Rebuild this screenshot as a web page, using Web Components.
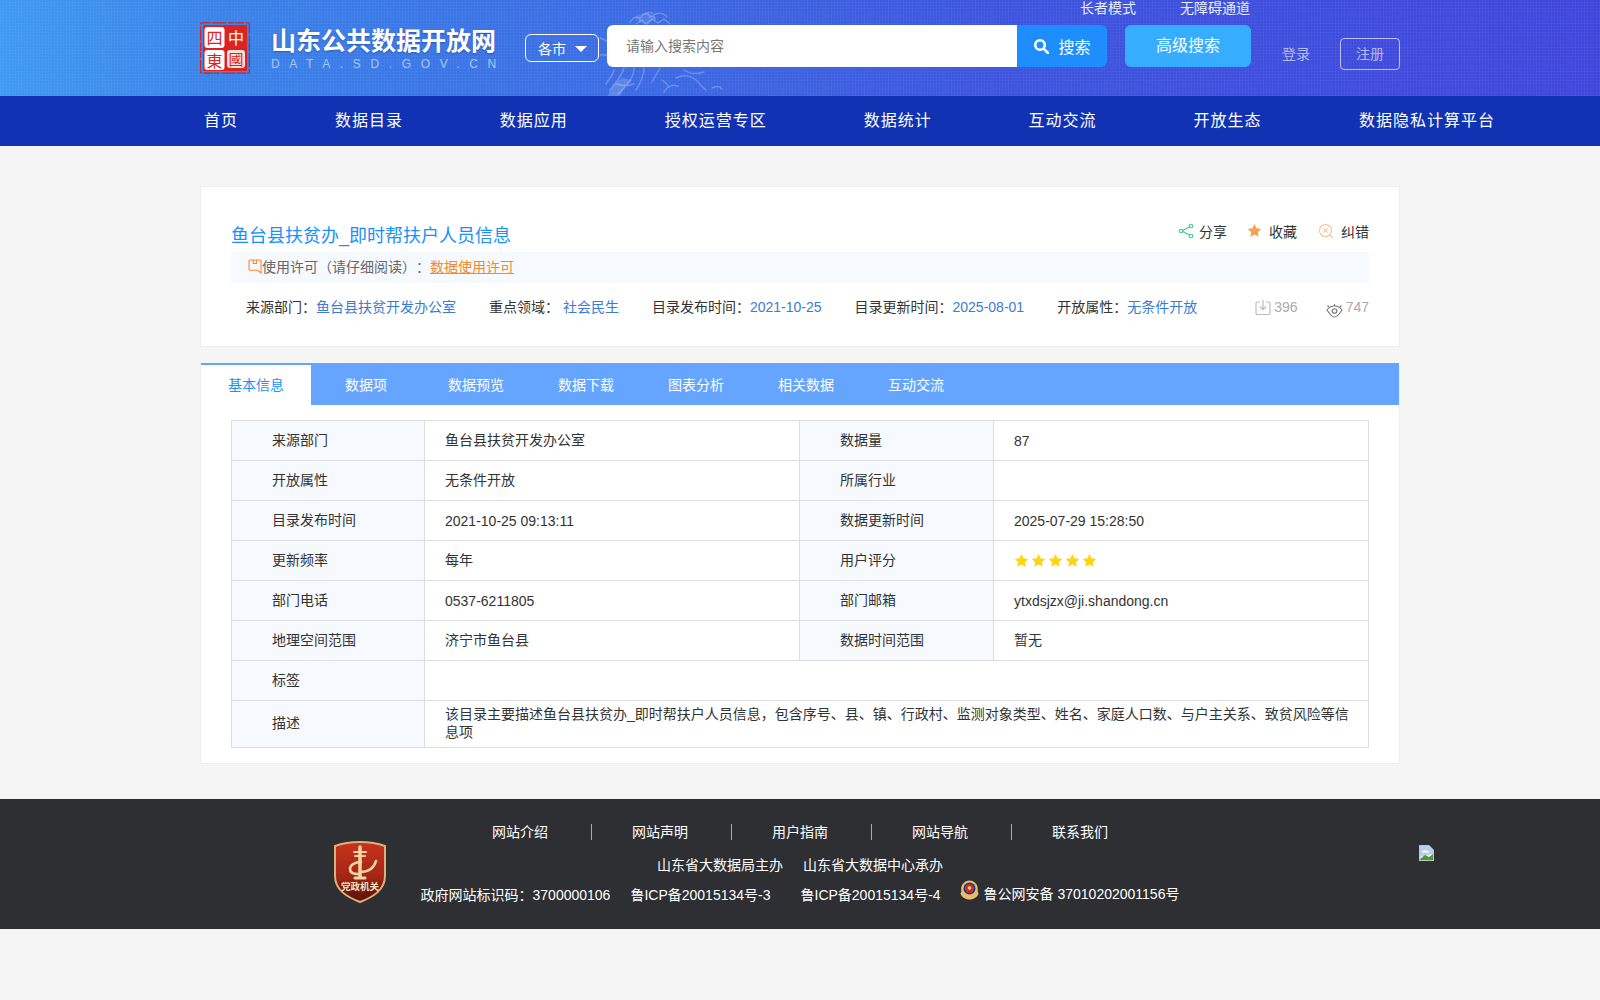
<!DOCTYPE html>
<html lang="zh-CN"><head><meta charset="utf-8"><title>山东公共数据开放网</title>
<style>
html,body{margin:0;padding:0;background:#f5f5f5;font:14px "Liberation Sans","Noto Sans CJK SC",sans-serif;color:#333;text-spacing-trim:space-all}
sd-main{display:block;width:1200px;margin:40px auto 35px}
</style></head><body>
<sd-header></sd-header>
<sd-nav></sd-nav>
<sd-main>
  <sd-summary></sd-summary>
  <sd-detail></sd-detail>
</sd-main>
<sd-footer></sd-footer>
<script>
const star=(c,s)=>`<svg width="${s}" height="${s}" viewBox="0 0 24 24"><path fill="${c}" d="M12 1.5l3.3 6.9 7.5 1-5.5 5.2 1.4 7.5L12 18.4l-6.7 3.7 1.4-7.5L1.2 9.4l7.5-1z"/></svg>`;
const col=`<span style='font-family:"Noto Sans CJK TC",sans-serif;line-height:0'>：</span>`;
function def(name,css,html){
  customElements.define(name,class extends HTMLElement{
    constructor(){super();const r=this.attachShadow({mode:'open'});r.innerHTML=`<style>${css}</style>${html}`;}
  });
}
def('sd-header',`
:host{display:block;height:96px;position:relative;overflow:hidden;color:#fff;
 background:repeating-linear-gradient(0deg,rgba(255,255,255,.03) 0 1px,transparent 1px 3px),repeating-linear-gradient(90deg,rgba(255,255,255,.03) 0 1px,transparent 1px 3px),linear-gradient(90deg,#3f9af1 0,#3a84ea 200px,#3d55de 1000px,#4046dc 1600px)}
.globe{position:absolute;left:600px;top:0}
.in{position:relative;width:1200px;margin:0 auto;display:flex;align-items:flex-start}
.logo{display:flex;margin-top:22px;width:325px;flex:none}
.seal{display:block;flex:none}
.names{margin-left:21px;margin-top:5px}
.t{font-size:25px;line-height:29px;font-weight:bold;white-space:nowrap;text-shadow:0 1px 2px rgba(0,0,60,.3)}
.s{font-size:12px;line-height:14px;margin-top:1px;letter-spacing:9.65px;color:#a6c8f4;white-space:nowrap}
.city{box-sizing:border-box;margin-top:34px;width:74px;height:28px;border:1px solid #fff;border-radius:6px;display:flex;align-items:center;padding-left:12px;font-size:14px;flex:none}
.city i{margin-left:9px;margin-top:2px;border:6px solid transparent;border-top:6px solid #fff;border-bottom:0}
.right{margin-left:8px;flex:1;min-width:0}
.top{display:flex;height:17px;line-height:17px;font-size:14px;padding-left:473px;gap:44px;color:#e8ecfb}
.row{display:flex;margin-top:8px;align-items:flex-start}
.input{box-sizing:border-box;width:410px;height:42px;background:#fff;border-radius:6px 0 0 6px;color:#777;font-size:14px;line-height:42px;padding-left:19px}
.btn{width:90px;height:42px;background:#1e8eff;border-radius:0 6px 6px 0;display:flex;align-items:center;justify-content:center;gap:9px;font-size:16px}
.adv{margin-left:18px;width:126px;height:42px;line-height:42px;text-align:center;background:#36adff;border-radius:6px;font-size:16px}
.login{margin-left:31px;margin-top:20px;line-height:18px;width:28px;color:rgba(255,255,255,.62);white-space:nowrap}
.reg{box-sizing:border-box;margin-left:30px;margin-top:13px;width:60px;height:32px;line-height:30px;text-align:center;border:1px solid rgba(255,255,255,.65);border-radius:4px;color:rgba(255,255,255,.62)}
`,`
<svg class="globe" width="190" height="96" viewBox="0 0 190 96" fill="none" stroke="#dfeaff" stroke-linecap="round">
 <g opacity=".28" stroke-width="1.500">
  <path d="M30 22c4-6 8-6 10-3 3-6 8-7 10-2 3-2 5 0 5 3M44 14c5-2 9-2 10 1 4-3 10-2 13 2M36 24l6-4 4 4 6-5 6 4 6-4 6 5"/>
  <path d="M0 38c4 1 7 3 10 6M0 55c5-1 8 0 12 3"/>
  <path d="M14 70c-1 5-5 9-8 14M24 68c-2 8-8 14-14 22M34 68c0 9-7 18-16 26M44 68c0 8-3 14-8 22M60 68l-8 14M16 84c6 2 12 2 18 0"/>
  <path d="M76 78c8-4 14-3 20 2 4 3 6 8 10 10M84 70c6 4 14 4 20 2M64 92c4-6 8-8 14-6M112 88c4-2 8-2 10 1M62 80c3 2 5 3 7 7"/>
 </g>
 <path d="M8 96c2-8 8-14 14-18l10 2-8 8-4 8z" fill="#dfeaff" stroke="none" opacity=".2"/>
 <path d="M34 18c6-6 14-6 22-1l-8 8-8-2z" fill="#dfeaff" stroke="none" opacity=".13"/>
</svg>
<div class="in">
 <div class="logo">
  <svg class="seal" width="50" height="52" viewBox="0 0 50 52">
   <rect x=".6" y=".8" width="48.800" height="50.400" rx="1" fill="none" stroke="#d9201f" stroke-width="1.200" stroke-dasharray="9 1.500 14 2 6 1"/>
   <rect x="3" y="3" width="44" height="46" fill="#dc2320"/>
   <rect x="4.500" y="5" width="20" height="21" rx="3" fill="#fff"/>
   <rect x="4.500" y="28" width="20" height="20" rx="3" fill="#fff"/>
   <text x="14.500" y="22" text-anchor="middle" font-size="16" fill="#dc2320" font-family="Noto Sans CJK SC">四</text>
   <text x="14.500" y="44.500" text-anchor="middle" font-size="16" fill="#dc2320" font-family="Noto Sans CJK SC">東</text>
   <rect x="27" y="28" width="18" height="18" rx="3" fill="#f9e2dc"/>
   <text x="36" y="22" text-anchor="middle" font-size="16" fill="#fff" font-family="Noto Sans CJK SC">中</text>
   <text x="36" y="43" text-anchor="middle" font-size="15" fill="#dc2320" font-family="Noto Sans CJK SC">國</text>
  </svg>
  <div class="names"><div class="t">山东公共数据开放网</div><div class="s">DATA.SD.GOV.CN</div></div>
 </div>
 <div class="city">各市<i></i></div>
 <div class="right">
  <div class="top"><span>长者模式</span><span>无障碍通道</span></div>
  <div class="row">
   <div class="input">请输入搜索内容</div>
   <div class="btn"><svg width="16" height="16" viewBox="0 0 16 16" fill="none" stroke="#fff" stroke-width="2.600"><circle cx="7" cy="7" r="4.800"/><path d="M10.600 10.600L15 15" stroke-linecap="round"/></svg>搜索</div>
   <div class="adv">高级搜索</div>
   <div class="login">登录</div>
   <div class="reg">注册</div>
  </div>
 </div>
</div>`);
def('sd-nav',`
:host{display:block;height:50px;background:#1133b3;color:#fff}
.in{width:1200px;margin:0 auto;display:flex;gap:96.900px;padding-left:4px;box-sizing:border-box;font-size:16px;letter-spacing:1px;line-height:50px;white-space:nowrap}
.in span:last-child{margin-left:.7px}
`,`<div class="in"><span>首页</span><span>数据目录</span><span>数据应用</span><span>授权运营专区</span><span>数据统计</span><span>互动交流</span><span>开放生态</span><span>数据隐私计算平台</span></div>`);
def('sd-summary',`
:host{display:block;box-sizing:border-box;height:161px;background:#fff;border:1px solid #eee;padding:30px 30px 0}
.head{display:flex;justify-content:space-between;align-items:center;height:35px}
h1{margin:0;padding-top:4px;font-size:18px;font-weight:normal;color:#1890ff;line-height:35px}
.acts{display:flex;align-items:center;color:#333;font-size:14px;margin-top:-8px}
.acts span{display:flex;align-items:center}
.acts svg{display:block}
.lic{height:31px;background:#f6f9fe;display:flex;align-items:center;padding-left:17px;color:#666;line-height:31px}
.lic svg{margin-top:-3px;flex:none}
.lic a{color:#f7882f;text-decoration:underline}
.meta{display:flex;align-items:center;margin-top:9px;padding-left:15px;line-height:30px;white-space:nowrap}
.meta b{font-weight:normal;color:#3a7bd5}
.meta>span{margin-right:33px}
.stats{margin-left:auto;display:flex;align-items:center;color:#aaa}
.stats svg{display:block}
`,`
<div class="head"><h1>鱼台县扶贫办_即时帮扶户人员信息</h1>
 <div class="acts">
  <span><svg width="16" height="16" viewBox="0 0 16 16" fill="none" stroke="#3ecb8b" stroke-width="1.100"><path d="M12.500 3.400L3.600 8l8.900 4.600"/><circle cx="13" cy="3" r="1.800" fill="#fff"/><circle cx="3" cy="8" r="1.800" fill="#fff"/><circle cx="13" cy="13" r="1.800" fill="#fff"/></svg><span style="margin-left:5px">分享</span></span>
  <span style="margin-left:20px">${star('#f9a050',15)}<span style="margin-left:7px">收藏</span></span>
  <span style="margin-left:21px"><svg width="16" height="16" viewBox="0 0 16 16" fill="none" stroke="#f8c291" stroke-width="1.100"><circle cx="7.500" cy="7.500" r="6"/><path d="M5.300 5.300l4.400 4.400M9.700 5.300l-4.400 4.400M12 12l3 3"/></svg><span style="margin-left:7px">纠错</span></span>
 </div>
</div>
<div class="lic"><svg width="14" height="15" viewBox="0 0 14 15" fill="none" stroke="#f7882f" stroke-width="1.100"><path d="M2 1h10a1 1 0 0 1 1 1v12l-3.500-2.800H2a1 1 0 0 1-1-1V2a1 1 0 0 1 1-1z"/><path d="M5.200 1v3.500h3.200V1"/></svg><span>使用许可（请仔细阅读）${col}</span><a>数据使用许可</a></div>
<div class="meta">
 <span>来源部门${col}<b>鱼台县扶贫开发办公室</b></span>
 <span>重点领域${col} <b>社会民生</b></span>
 <span>目录发布时间${col}<b>2021-10-25</b></span>
 <span>目录更新时间${col}<b>2025-08-01</b></span>
 <span>开放属性${col}<b>无条件开放</b></span>
 <div class="stats">
  <svg width="16" height="17" viewBox="0 0 16 17" fill="none" stroke="#bbb" stroke-width="1.200"><path d="M5 3H2.500A1.500 1.500 0 0 0 1 4.500V14a1.500 1.500 0 0 0 1.500 1.500h11A1.500 1.500 0 0 0 15 14V4.500A1.500 1.500 0 0 0 13.500 3H11M8 1v9M4.800 7.500L8 10.700l3.200-3.200"/></svg>
  <span style="margin-left:3px">396</span>
  <svg style="margin:3px 0 -3px 28px" width="17" height="15" viewBox="0 0 17 15" fill="none" stroke="#777" stroke-width="1.100"><path d="M1 7c2-3 4.500-4 7.500-4s5.500 1 7.500 4c-2 3-4.500 7-7.500 7S3 10 1 7z"/><circle cx="8.500" cy="8" r="2.300"/><path d="M3 4L1.500 2.500M8.500 3V1M14 4l1.500-1.500"/></svg>
  <span style="margin-left:3px">747</span>
 </div>
</div>`);
def('sd-tabs',`
:host{display:flex;height:42px;background:#66a5ff;box-sizing:border-box;color:#fff;font-size:14px}
span{width:110px;text-align:center;line-height:40px;height:40px;margin-top:2px}
span:first-of-type{background:#fff;color:#1890ff}
`,`<span>基本信息</span><span>数据项</span><span>数据预览</span><span>数据下载</span><span>图表分析</span><span>相关数据</span><span>互动交流</span>`);
def('sd-table',`
:host{display:block;padding:15px 30px 15px}
table{border-collapse:collapse;width:1137px;table-layout:fixed;font-size:14px;color:#333}
td{border:1px solid #ddd;height:39px;padding:0 20px 2px;line-height:18px;box-sizing:border-box}
td.l{background:#f6f9fe;padding-left:40px}
td.n{padding-bottom:0}
tr{height:40px}
tr.d{height:47px}
tr.d td{height:47px;padding-top:0;padding-bottom:2px}
tr.d td:last-child{padding-right:18px}
.stars{display:flex;gap:2px;padding-top:1px}
.stars svg{display:block}
`,`<table><colgroup><col style="width:193px"><col style="width:375px"><col style="width:194px"><col style="width:375px"></colgroup>
<tr><td class="l">来源部门</td><td>鱼台县扶贫开发办公室</td><td class="l">数据量</td><td class="n">87</td></tr>
<tr><td class="l">开放属性</td><td>无条件开放</td><td class="l">所属行业</td><td></td></tr>
<tr><td class="l">目录发布时间</td><td class="n">2021-10-25 09:13:11</td><td class="l">数据更新时间</td><td class="n">2025-07-29 15:28:50</td></tr>
<tr><td class="l">更新频率</td><td>每年</td><td class="l">用户评分</td><td><div class="stars">${star('#ffd414',15).repeat(5)}</div></td></tr>
<tr><td class="l">部门电话</td><td class="n">0537-6211805</td><td class="l">部门邮箱</td><td class="n">ytxdsjzx@ji.shandong.cn</td></tr>
<tr><td class="l">地理空间范围</td><td>济宁市鱼台县</td><td class="l">数据时间范围</td><td>暂无</td></tr>
<tr><td class="l">标签</td><td colspan="3"></td></tr>
<tr class="d"><td class="l">描述</td><td colspan="3">该目录主要描述鱼台县扶贫办_即时帮扶户人员信息，包含序号、县、镇、行政村、监测对象类型、姓名、家庭人口数、与户主关系、致贫风险等信息项</td></tr>
</table>`);
def('sd-detail',`
:host{display:block;box-sizing:border-box;height:401px;margin-top:16px;background:#fff;border:1px solid #eee;border-top:0}
`,`<sd-tabs></sd-tabs><sd-table></sd-table>`);
def('sd-footer',`
:host{display:block;box-sizing:border-box;height:130px;background:#2e2f33;color:#fff;font-size:14px}
.in{display:flex;align-items:flex-start;padding-left:334px}
.sh{flex:none;margin-top:42px;display:block}
.c{width:800px;margin-left:14px;flex:none;text-align:center;white-space:nowrap}
.links{display:flex;justify-content:center;margin:25px 0 0 4px;height:16px;line-height:16px}
.links span{width:140px;box-sizing:border-box;border-right:1px solid #aaa;text-align:left;padding-left:40px}
.links span:last-child{border:0}
.r2{margin-top:16px;line-height:18px;display:flex;justify-content:center;gap:20px}
.r3{margin-top:6px;display:flex;justify-content:center;align-items:flex-start;line-height:18px}
.r3>span{margin-top:6px}
.bad{display:block;margin:0 5px 0 19px}
.bk{flex:none;margin:46px 0 0 219px;display:block}
`,`<div class="in">
<svg class="sh" width="52" height="62" viewBox="0 0 52 62">
 <defs><linearGradient id="g" x1="0" y1="0" x2="0" y2="1"><stop offset="0" stop-color="#c8331d"/><stop offset=".6" stop-color="#a32515"/><stop offset=".72" stop-color="#7c1a10"/><stop offset="1" stop-color="#5e120c"/></linearGradient></defs>
 <path d="M26 1c8 0 17 1 25 4v30c0 14-12 21-25 26C13 56 1 49 1 35V5C9 2 18 1 26 1z" fill="url(#g)" stroke="#dcb078" stroke-width="2"/>
 <g fill="none" stroke="#f2d7a4" stroke-linecap="round">
  <path d="M26 6v30" stroke-width="3.500"/><path d="M20 11h12M21 15h10" stroke-width="2"/>
  <path d="M21 37h10" stroke-width="3"/>
  <path d="M27 21c-6 0-11 3-11 7 0 3 3 5 8 5M26 31c8 0 14-4 16-11" stroke-width="2.600"/>
 </g>
 <text x="26" y="49" text-anchor="middle" font-size="9.500" font-weight="bold" fill="#f5e4c0" font-family="Noto Sans CJK SC">党政机关</text>
</svg>
<div class="c">
 <div class="links"><span>网站介绍</span><span>网站声明</span><span>用户指南</span><span>网站导航</span><span>联系我们</span></div>
 <div class="r2"><span>山东省大数据局主办</span><span>山东省大数据中心承办</span></div>
 <div class="r3"><span>政府网站标识码${col}3700000106</span><span style="margin-left:20px">鲁ICP备20015134号-3</span><span style="margin-left:30px">鲁ICP备20015134号-4</span>
  <svg class="bad" width="19" height="20" viewBox="0 0 19 20"><path d="M9.500 19.500c-3 0-8-2-9-6 .5-1 1-2 .8-3.500C.5 5 4.500.5 9.500.5s9 4.500 8.200 9.500c-.2 1.500.3 2.500.8 3.500-1 4-6 6-9 6z" fill="#e8bd6a"/><circle cx="9.500" cy="8.500" r="6" fill="#1d3a8a"/><circle cx="9.500" cy="8.500" r="4.500" fill="#d12a1f"/><circle cx="9.500" cy="8" r="1.800" fill="#f3cf7a"/></svg>
  <span style="margin-top:5px">鲁公网安备 37010202001156号</span></div>
</div>
<svg class="bk" width="16" height="16" viewBox="0 0 16 16"><path d="M0 0h10l5 5v11H0z" fill="#c3c3c3"/><path d="M1 1h8.500L14 5.500V15H1z" fill="#fff"/><path d="M1 1h8.500L14 5.500V9l-13 3z" fill="#b9cff0"/><path d="M1 15v-1l5-4 4 2 4-3v6z" fill="#4e9a2f"/><path d="M3 7c1-2 3-2 4-1 2-.5 3 .5 3 1.500H3z" fill="#fff"/></svg>
</div>`);
</script>
</body></html>
